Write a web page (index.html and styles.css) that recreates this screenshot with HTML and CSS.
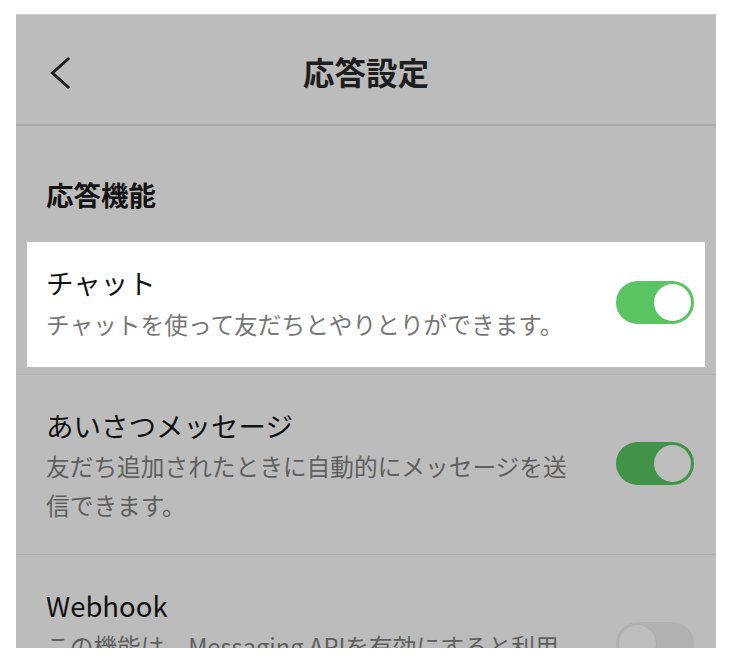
FILE: index.html
```html
<!DOCTYPE html>
<html lang="ja">
<head>
<meta charset="utf-8">
<title>応答設定</title>
<link rel="stylesheet" href="styles.css">
</head>
<body>
<div class="screen">
  <header class="header">
    <div class="back">
      <svg width="22" height="34" viewBox="0 0 22 34" aria-hidden="true">
        <polyline points="19,3 3.5,17 19,31" fill="none" stroke="#1f1f1f" stroke-width="3" stroke-linecap="square" stroke-linejoin="miter"/>
      </svg>
    </div>
    <h1 class="title">応答設定</h1>
    <div></div>
  </header>

  <h2 class="section">応答機能</h2>

  <div class="row row-focus">
    <div class="item">
      <div class="text">
        <div class="item-title">チャット</div>
        <div class="item-desc">チャットを使って友だちとやりとりができます。</div>
      </div>
      <div class="toggle on"><span class="knob"></span></div>
    </div>
  </div>

  <div class="row">
    <div class="item">
      <div class="text">
        <div class="item-title">あいさつメッセージ</div>
        <div class="item-desc">友だち追加されたときに自動的にメッセージを送信できます。</div>
      </div>
      <div class="toggle on dim"><span class="knob"></span></div>
    </div>
  </div>

  <div class="row">
    <div class="item">
      <div class="text">
        <div class="item-title">Webhook</div>
        <div class="item-desc">この機能は、Messaging APIを有効にすると利用できます。</div>
      </div>
      <div class="toggle off"><span class="knob"></span></div>
    </div>
  </div>
</div>
</body>
</html>
```

FILE: styles.css
```css
* { box-sizing: border-box; }

html, body {
  margin: 0;
  padding: 0;
  background: #ffffff;
}

body {
  font-family: "Noto Sans CJK JP", "Noto Sans", sans-serif;
  color: #111111;
}

.screen {
  margin: 14px 16px 0;
  width: 700px;
  height: 634px;
  overflow: hidden;
  background: #bcbcbc;
  border-top: 1px solid #cdcdcd;
}

.header {
  height: 111px;
  padding: 36px 0 33px;
  display: grid;
  grid-template-columns: 1fr auto 1fr;
  align-items: center;
  border-bottom: 2px solid #a9a9a9;
}

.back {
  padding-left: 33px;
  padding-top: 3px;
  display: flex;
  align-items: center;
}

.back svg { display: block; }

.title {
  margin: 0;
  font-size: 31.5px;
  line-height: 40px;
  font-weight: 700;
  color: #1e1e1e;
}

.section {
  margin: 0;
  padding: 48px 0 20px 30px;
  font-size: 27.5px;
  line-height: 40px;
  font-weight: 700;
  color: #141414;
}

.row {
  padding: 29px 22px 29px 30px;
  border-bottom: 1px solid #b2b2b2;
}

.row-focus {
  padding: 8px 11px 7px 11px;
}

.row-focus .item {
  background: #ffffff;
  padding: 19px 11px 23px 19px;
}

.item {
  display: flex;
  align-items: center;
}

.text {
  flex: 1;
  min-width: 0;
}

.item-title {
  font-size: 27.5px;
  line-height: 43px;
  color: #111111;
}

.row-focus .item-desc { margin-top: 1px; }

.item-desc {
  max-width: 530px;
  font-size: 23.7px;
  line-height: 39px;
  color: #5f5f5f;
}

.row-focus .item-desc { color: #777777; }

.toggle {
  width: 78px;
  height: 43px;
  border-radius: 22px;
  padding: 3px;
  display: flex;
  margin-top: -3px;
  flex: none;
}

.row-focus .toggle { margin-top: 0; }

.toggle .knob {
  width: 37px;
  height: 37px;
  border-radius: 50%;
  background: #ffffff;
}

.toggle.on { background: #5bc462; justify-content: flex-end; }
.toggle.on.dim { background: #409347; }
.toggle.on.dim .knob { background: #bdbdbd; }

.toggle.off {
  background: #b1b1b1;
  justify-content: flex-start;
}

.toggle.off .knob {
  background: #bdbdbd;
  box-shadow: 0 0 0 1px #adadad;
}
```
